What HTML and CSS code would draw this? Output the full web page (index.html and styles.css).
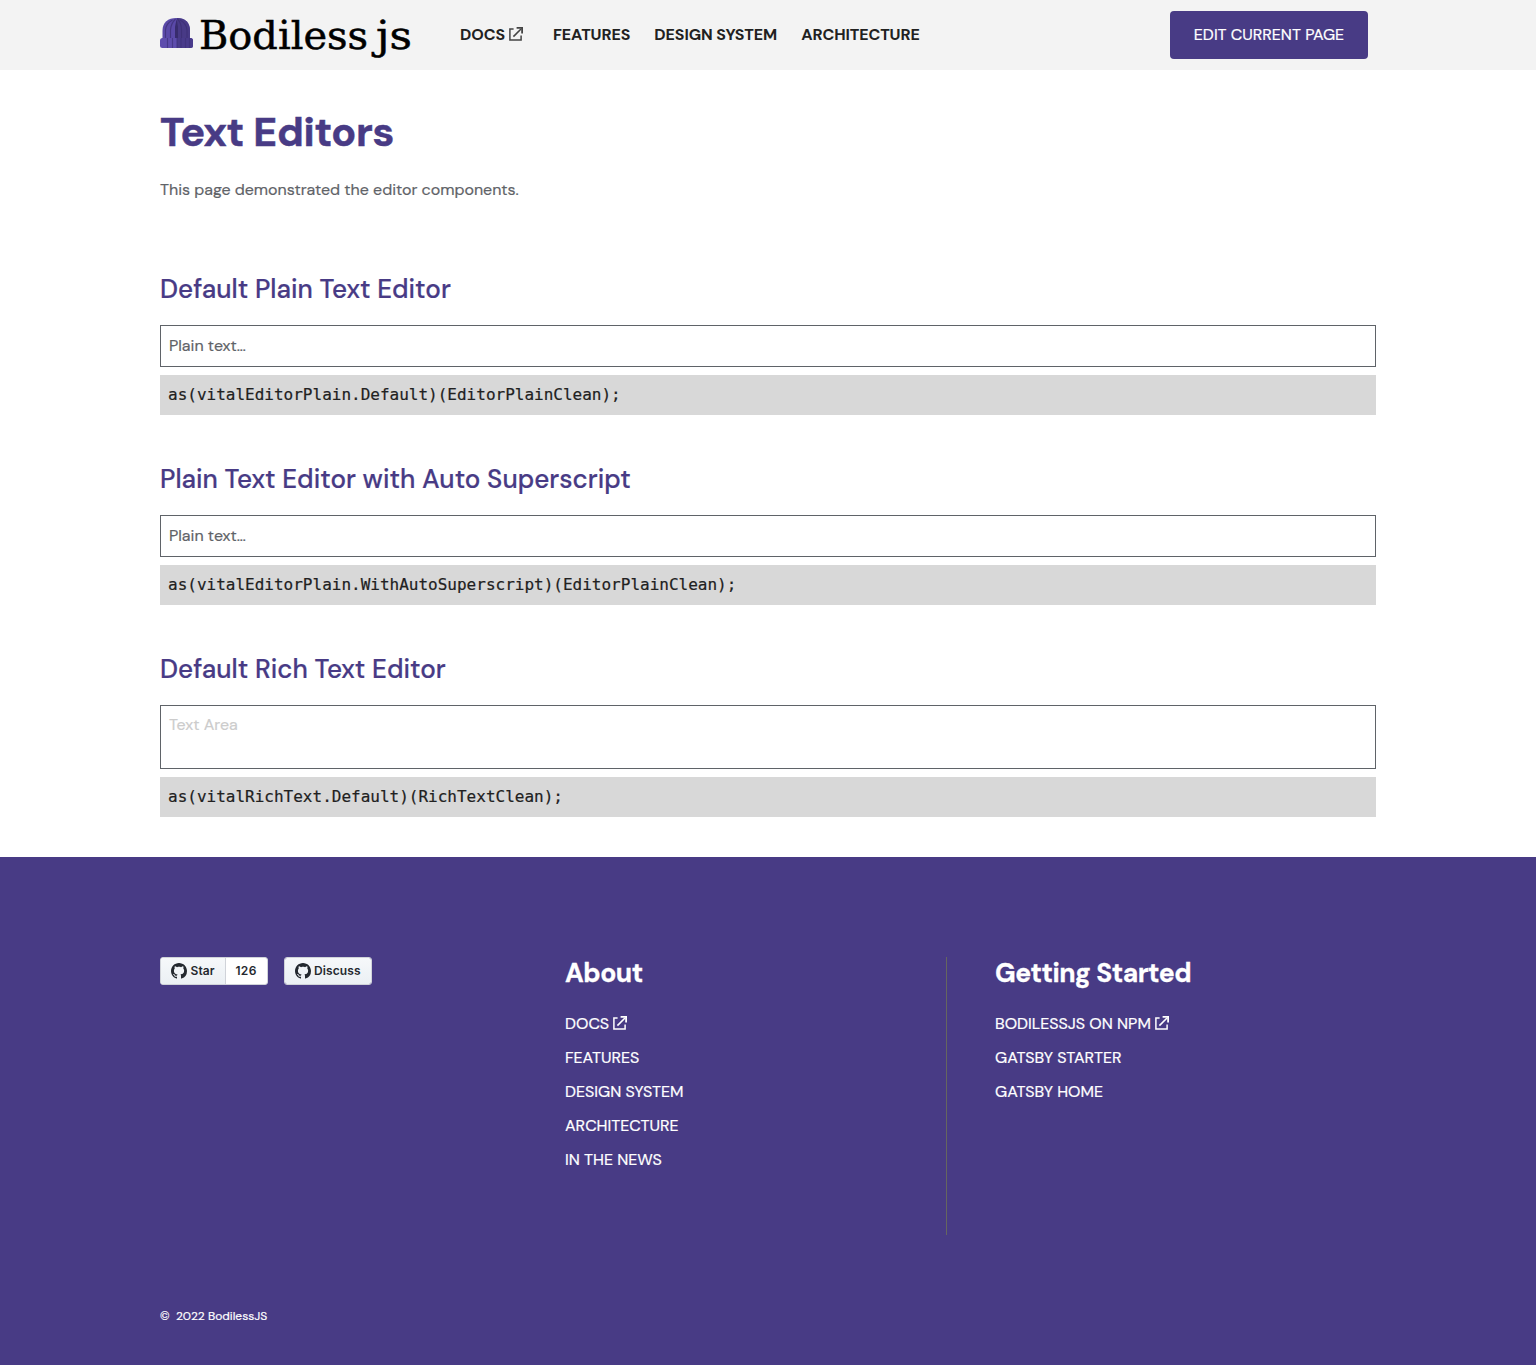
FILE: index.html
```html
<!DOCTYPE html>
<html lang="en">
<head>
<meta charset="utf-8">
<title>Text Editors</title>
<link rel="stylesheet" href="styles.css">
</head>
<body>
<svg class="defs" aria-hidden="true">
  <symbol id="external" viewBox="0 0 14 14">
    <path d="M4.600 2H.9v11.100h11.200V8.600" fill="none" stroke="currentColor" stroke-width="1.500"/>
    <path d="M4.400 9.600 12 2" fill="none" stroke="currentColor" stroke-width="1.600"/>
    <path d="M7.600 .9H13.100V6.400" fill="none" stroke="currentColor" stroke-width="1.800"/>
  </symbol>
  <symbol id="github" viewBox="0 0 16 16">
    <path fill="currentColor" d="M8 0C3.58 0 0 3.58 0 8c0 3.54 2.29 6.53 5.47 7.59.4.07.55-.17.55-.38 0-.19-.01-.82-.01-1.49-2.01.37-2.53-.49-2.69-.94-.09-.23-.48-.94-.82-1.13-.28-.15-.68-.52-.01-.53.63-.01 1.08.58 1.23.82.72 1.21 1.87.87 2.33.66.07-.52.28-.87.51-1.07-1.78-.2-3.64-.89-3.64-3.95 0-.87.31-1.59.82-2.15-.08-.2-.36-1.02.08-2.12 0 0 .67-.21 2.2.82.64-.18 1.32-.27 2-.27s1.36.09 2 .27c1.53-1.04 2.2-.82 2.2-.82.44 1.1.16 1.92.08 2.12.51.56.82 1.27.82 2.15 0 3.07-1.87 3.75-3.65 3.95.29.25.54.73.54 1.48 0 1.07-.01 1.93-.01 2.2 0 .21.15.46.55.38A8.01 8.01 0 0 0 16 8c0-4.42-3.58-8-8-8z"/>
  </symbol>
</svg>

<header class="header">
  <div class="container header-row">
    <a class="logo">
      <svg width="252" height="50" viewBox="0 0 252 50">
        <path d="M2.500 29V21C2.500 12 8 8 16.500 8S30 12 30 21v8z" fill="#5a49a8"/>
        <path d="M17 8c8 0 13 4 13 13v8H17z" fill="#483a86"/>
        <path d="M5.500 28V20c.5-5 3-8 7-10M10.500 28v-8c.3-5 2-8 5-11M21.500 28v-8c0-5-1-8-4-11M27 28v-8c-.5-5-3-8-7-10" fill="none" stroke="#3a2e72" stroke-width="1.100" stroke-opacity=".7"/>
        <path d="M15 28V17l1.600-8 1.400 8v11" fill="#382c6d"/>
        <rect x="0" y="28" width="33" height="10" rx="2.500" fill="#5e4dad"/>
        <path d="M17 28h13.500a2.500 2.500 0 0 1 2.500 2.500v5a2.500 2.500 0 0 1-2.500 2.500H17z" fill="#493b8b"/>
        <path d="M7.500 28v10M12.500 28v10M17 28v10M21 28v10M25.500 28v10M29.500 28v10" stroke="#3d3079" stroke-width="1.100" stroke-opacity=".7"/>
        <text class="logo-text" x="39" y="38.500" textLength="169" lengthAdjust="spacingAndGlyphs">Bodiless</text>
        <text class="logo-text" x="216" y="38.500" textLength="36" lengthAdjust="spacingAndGlyphs">js</text>
      </svg>
    </a>
    <nav class="nav">
      <a class="nav-docs">DOCS<svg class="ext"><use href="#external"/></svg></a>
      <a>FEATURES</a>
      <a>DESIGN SYSTEM</a>
      <a>ARCHITECTURE</a>
    </nav>
    <a class="edit">EDIT CURRENT PAGE</a>
  </div>
</header>

<main class="container main">
  <h1>Text Editors</h1>
  <p class="intro">This page demonstrated the editor components.</p>

  <section class="demo">
    <h2>Default Plain Text Editor</h2>
    <div class="field plain">Plain text…</div>
    <pre class="code">as(vitalEditorPlain.Default)(EditorPlainClean);</pre>
  </section>
  <section class="demo">
    <h2>Plain Text Editor with Auto Superscript</h2>
    <div class="field plain">Plain text…</div>
    <pre class="code">as(vitalEditorPlain.WithAutoSuperscript)(EditorPlainClean);</pre>
  </section>
  <section class="demo">
    <h2>Default Rich Text Editor</h2>
    <div class="field area">Text Area</div>
    <pre class="code">as(vitalRichText.Default)(RichTextClean);</pre>
  </section>
</main>

<footer class="footer">
  <div class="container footer-inner">
    <div class="columns">
      <div class="badges">
        <div class="badge">
          <span class="badge-label"><svg class="gh"><use href="#github"/></svg>Star</span>
          <span class="badge-count">126</span>
        </div>
        <div class="badge">
          <span class="badge-label"><svg class="gh"><use href="#github"/></svg>Discuss</span>
        </div>
      </div>
      <div class="about">
        <h3>About</h3>
        <ul>
          <li>DOCS<svg class="ext"><use href="#external"/></svg></li>
          <li>FEATURES</li>
          <li>DESIGN SYSTEM</li>
          <li>ARCHITECTURE</li>
          <li>IN THE NEWS</li>
        </ul>
      </div>
      <div class="started">
        <h3>Getting Started</h3>
        <ul>
          <li>BODILESSJS ON NPM<svg class="ext"><use href="#external"/></svg></li>
          <li>GATSBY STARTER</li>
          <li>GATSBY HOME</li>
        </ul>
      </div>
    </div>
    <p class="copyright"><span class="mark">©</span>2022 BodilessJS</p>
  </div>
</footer>
</body>
</html>
```
FILE: styles.css
```css
* { box-sizing: border-box; margin: 0; padding: 0; }

body {
  font-family: "DM Sans", Inter, sans-serif;
  font-size: 16px;
  line-height: 24px;
  color: #5f6368;
  background: #fff;
}

.defs { display: none; }
.container { width: 1216px; margin: 0 auto; }
.ext { width: 14px; height: 14px; flex: none; margin: -2px 0 0 4px; }

/* Header */
.header { height: 70px; background: #f3f3f3; }
.header-row { height: 70px; display: flex; align-items: center; }
.logo { width: 300px; height: 50px; }
.logo svg { display: block; }
.logo-text {
  font-family: "American Typewriter", "DejaVu Serif", serif;
  font-size: 39.5px;
  fill: #000;
  stroke: #000;
  stroke-width: 0.5px;
}
.nav { display: flex; gap: 24px; color: #212121; font-weight: 700; letter-spacing: -0.08px; white-space: nowrap; }
.nav a { display: flex; align-items: center; }
.nav-docs { width: 69px; }
.nav .ext { color: #444; }
.edit {
  width: 198px;
  height: 48px;
  margin: 0 8px 0 auto;
  border-radius: 4px;
  background: #483b85;
  color: #fff;
  line-height: 48px;
  text-align: center;
  white-space: nowrap;
  -webkit-text-stroke: 0.2px currentColor;
}

/* Editors */
.main { padding: 38px 0 40px; }
h1 {
  height: 62px;
  color: #483b85;
  font-size: 41px;
  line-height: 48px;
  font-weight: 700;
  letter-spacing: -0.3px;
  -webkit-text-stroke: 0.5px currentColor;
}
.intro { height: 24px; margin-top: 8px; letter-spacing: -0.02px; }
.demo { margin-top: 48px; }
.intro + .demo { margin-top: 71px; }
h2 { color: #483b85; font-size: 26px; line-height: 32px; font-weight: 500; margin-bottom: 20px; letter-spacing: 0.02px; }
.intro, .field, h2, li, .copyright { -webkit-text-stroke: 0.2px currentColor; }
.field { border: 1px solid #5f6368; padding: 8px; }
.plain { height: 42px; }
.area { height: 64px; padding-top: 7px; color: #ccc; }
.code {
  height: 40px;
  margin-top: 8px;
  padding: 8px;
  background: #d8d8d8;
  color: #212121;
  font: 16px/24px "DejaVu Sans Mono", monospace;
  -webkit-text-stroke: 0.2px currentColor;
}

/* Footer */
.footer { height: 508px; background: #483b85; color: #fff; }
.footer-inner { padding-top: 100px; }
.columns { display: flex; height: 278px; }
.badges { width: 405px; display: flex; align-items: flex-start; gap: 16px; }
.badge {
  display: flex;
  height: 28px;
  border: 1px solid #d0d3d9;
  border-radius: 3px;
  overflow: hidden;
  background: #fff;
  color: #24292f;
  font: 600 12px/26px Inter, sans-serif;
  letter-spacing: 0.08px;
}
.badge-label { display: flex; align-items: center; gap: 3.5px; padding: 0 10px; background: linear-gradient(#f6f8fa, #ebf0f4); }
.badge-count { width: 42px; border-left: 1px solid #d0d3d9; text-align: center; letter-spacing: 0.35px; }
.gh { width: 16px; height: 16px; }
.about { width: 382px; border-right: 1px solid #66665f; }
.started { padding-left: 48px; }
h3 { font-size: 26.5px; line-height: 32px; font-weight: 700; letter-spacing: -0.48px; -webkit-text-stroke: 0.3px currentColor; }
ul { list-style: none; padding-top: 18px; }
li { display: flex; align-items: center; height: 34px; white-space: nowrap; }
.copyright { margin-top: 69px; font-size: 12px; }
.mark { display: inline-block; width: 16px; }
```
